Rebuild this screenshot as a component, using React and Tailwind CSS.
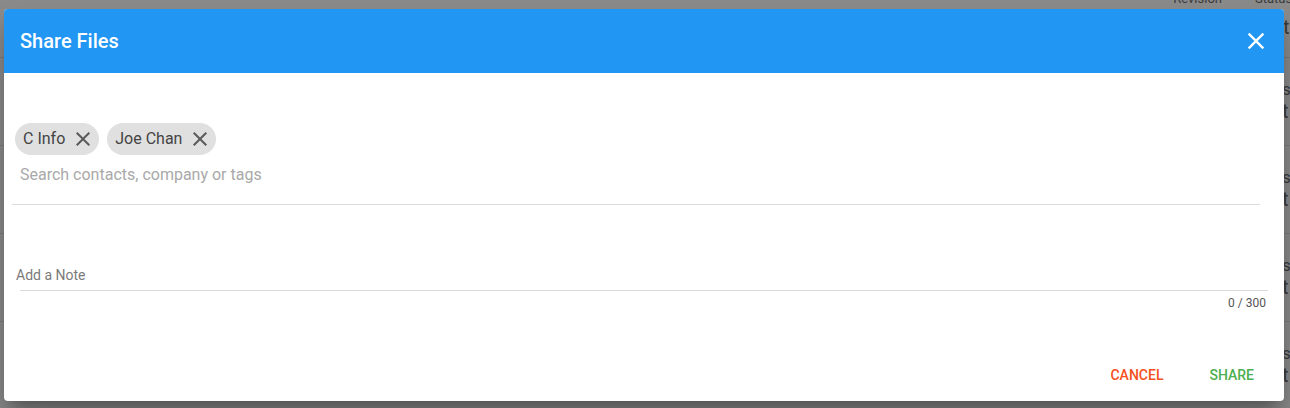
import React from 'react';

const rows = [0, 1, 2, 3];

const CloseIcon = ({ className }) => (
  <svg viewBox="0 0 24 24" className={className} fill="currentColor">
    <path d="M19 6.41 17.59 5 12 10.59 6.41 5 5 6.41 10.59 12 5 17.59 6.41 19 12 13.41 17.59 19 19 17.59 13.41 12z" />
  </svg>
);

const Chip = ({ label }) => (
  <div className="flex items-center h-8 rounded-full bg-[#e0e0e0] pl-2 pr-1 gap-1.5">
    <span className="text-[16px] text-[#444] leading-none">{label}</span>
    <CloseIcon className="w-6 h-6 text-[#5a5a5a]" />
  </div>
);

export default function App() {
  return (
    <div className="relative w-[1290px] h-[408px] overflow-hidden bg-[#8b8b8b] font-['Roboto',sans-serif]">
      {/* dimmed page behind the dialog */}
      <div className="flex flex-col text-[#3a3a3a]">
        <div className="flex justify-end gap-[33px] h-[58px] border-b border-[#7e7e7e] text-[13px] leading-none">
          <div className="flex flex-col gap-3 -mt-2">
            <span>Revision</span>
          </div>
          <div className="flex flex-col gap-3 -mt-2 w-[35px]">
            <span>Status</span>
            <span className="text-[20px] pl-[28px]">t</span>
          </div>
        </div>
        {rows.map((r) => (
          <div key={r} className="flex flex-col items-end h-[88px] border-b border-[#7e7e7e] pt-[20px] text-[17px] leading-[22px]">
            <span className="w-[8px]">s</span>
            <span className="w-[8px] text-[20px]">t</span>
          </div>
        ))}
      </div>

      {/* dialog */}
      <div className="absolute left-[4px] top-[9px] w-[1280px] h-[392px] bg-white rounded-[4px] overflow-hidden shadow-[0_11px_15px_-7px_rgba(0,0,0,0.3),0_24px_38px_3px_rgba(0,0,0,0.2)] flex flex-col">
        <div className="h-[64px] bg-[#2196f3] flex items-center justify-between pl-4 pr-[14px]">
          <span className="text-white text-[20px] font-medium">Share Files</span>
          <CloseIcon className="w-7 h-7 text-white" />
        </div>

        <div className="flex flex-col flex-1 px-[8px]">
          <div className="mt-[50px] flex gap-2 pl-[3px]">
            <Chip label="C Info" />
            <Chip label="Joe Chan" />
          </div>
          <div className="mt-[10px] pl-[8px] pb-[19px] mr-[16px] border-b border-[#dcdcdc] text-[16px] text-[#a9a9a9] leading-[20px]">
            Search contacts, company or tags
          </div>

          <div className="mt-[62px] pl-[4px] text-[14px] text-[#7a7a7a] leading-[16px]">Add a Note</div>
          <div className="mt-[7px] ml-[8px] mr-[8px] border-b border-[#dcdcdc]"></div>
          <div className="mt-[5px] pr-[10px] text-right text-[12px] text-[#555] leading-[14px]">0 / 300</div>

          <div className="mt-auto mb-[19px] flex justify-end gap-[46px] pr-[22px] text-[14px] font-medium leading-none">
            <span className="text-[#f4511e]">CANCEL</span>
            <span className="text-[#4caf50]">SHARE</span>
          </div>
        </div>
      </div>
    </div>
  );
}
